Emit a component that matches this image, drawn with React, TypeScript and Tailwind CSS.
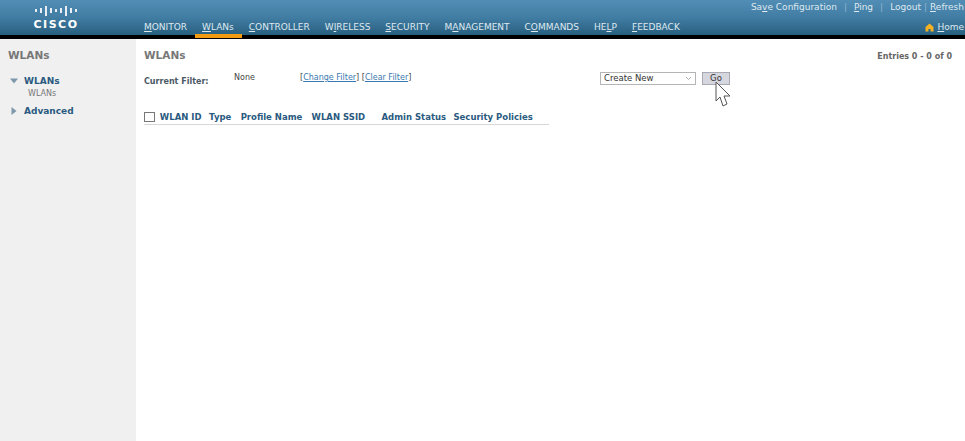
const nav: [string, string, string][] = [
  ["", "M", "ONITOR"],
  ["", "W", "LANs"],
  ["", "C", "ONTROLLER"],
  ["W", "I", "RELESS"],
  ["", "S", "ECURITY"],
  ["M", "A", "NAGEMENT"],
  ["C", "O", "MMANDS"],
  ["HE", "L", "P"],
  ["", "F", "EEDBACK"],
];

function Logo() {
  const bars = [3, 5, 10, 5, 3, 5, 10, 5, 3];
  return (
    <div className="flex w-[110px] flex-col items-center pt-[5px]">
      <div className="flex h-[11px] items-center gap-[3.4px] pl-[2px]">
        {bars.map((h, i) => (
          <div key={i} className="w-[1.6px] bg-[#e8eff4]" style={{ height: h }} />
        ))}
      </div>
      <div className="mt-[2px] pl-[2px] text-[11px] leading-[13px] font-bold tracking-[1.5px] text-white">CISCO</div>
    </div>
  );
}

function Header() {
  return (
    <header className="flex h-[39px] border-b-[4px] border-black bg-gradient-to-b from-[#518db5] via-[#417ca3] to-[#28607f]">
      <Logo />
      <nav className="flex items-start gap-[15px] pl-[34px] pt-[20.5px] text-[9px] leading-[12px] text-[#dfe9f0]">
        {nav.map(([a, b, c], i) => (
          <div key={i} className={i === 1 ? "relative" : ""}>
            <span>
              {a}
              <span className="underline">{b}</span>
              {c}
            </span>
            {i === 1 && <div className="absolute -left-[7px] -right-[8px] top-[13.5px] h-[4px] bg-[#f39c12]" />}
          </div>
        ))}
      </nav>
      <div className="ml-auto flex flex-col items-end pr-[1px] pt-px text-[9px] leading-[12px] text-[#dfe9f0]">
        <div className="flex items-center">
          <span>Sa<span className="underline">v</span>e Configuration</span>
          <span className="mx-[7px] text-[#8fb3cc]">|</span>
          <span><span className="underline">P</span>ing</span>
          <span className="mx-[7px] text-[#8fb3cc]">|</span>
          <span>Logout</span>
          <span className="mx-[3px] text-[#8fb3cc]">|</span>
          <span><span className="underline">R</span>efresh</span>
        </div>
        <div className="mt-[8px] flex items-center gap-[3px]">
          <svg width="9" height="9" viewBox="0 0 9 9"><path d="M4.5 0.5 L8.5 4 V8.5 H5.6 V6 H3.4 V8.5 H0.5 V4 Z" fill="#f5b324" /></svg>
          <span><span className="underline">H</span>ome</span>
        </div>
      </div>
    </header>
  );
}

function Sidebar() {
  return (
    <aside className="w-[136px] shrink-0 bg-[#f0f0f0] pl-[8px] pt-[10px]">
      <div className="text-[10.5px] leading-[13px] font-bold text-[#777777]">WLANs</div>
      <div className="mt-[13px] flex items-center gap-[6px] pl-[2px]">
        <svg width="8" height="6" viewBox="0 0 8 6"><path d="M0 0.5 H8 L4 5.5 Z" fill="#7d98ab" /></svg>
        <span className="text-[9px] leading-[12px] font-bold text-[#2a5a80]">WLANs</span>
      </div>
      <div className="pl-[20px] pt-px text-[8px] leading-[11px] text-[#777777]">WLANs</div>
      <div className="mt-[6px] flex items-center gap-[7px] pl-[3px]">
        <svg width="6" height="8" viewBox="0 0 6 8"><path d="M0.5 0 V8 L5.5 4 Z" fill="#7d98ab" /></svg>
        <span className="text-[9px] leading-[12px] font-bold text-[#2a5a80]">Advanced</span>
      </div>
    </aside>
  );
}

const cols: [string, string][] = [
  ["WLAN ID", "w-[50px]"],
  ["Type", "w-[32px]"],
  ["Profile Name", "w-[72px]"],
  ["WLAN SSID", "w-[71px]"],
  ["Admin Status", "w-[73px]"],
  ["Security Policies", "w-[97px]"],
];

function Main() {
  return (
    <main className="relative flex-1 pl-[8px] pr-[13px] pt-[10px]">
      <div className="flex items-start justify-between">
        <div className="text-[10.5px] leading-[13px] font-bold text-[#777777]">WLANs</div>
        <div className="pt-[3px] text-[8px] leading-[10px] font-bold text-[#666666]">Entries 0 - 0 of 0</div>
      </div>
      <div className="mt-[10px] flex items-start">
        <div className="w-[90px] pt-[4px] text-[8px] leading-[11px] font-bold text-[#4b5a66]">Current Filter:</div>
        <div className="w-[66px] text-[8px] leading-[11px] text-[#444444]">None</div>
        <div className="w-[300px] text-[8px] leading-[11px] text-[#444444]">
          [<span className="text-[#3b78b0] underline">Change Filter</span>] [<span className="text-[#3b78b0] underline">Clear Filter</span>]
        </div>
        <div className="flex h-[13px] w-[96px] items-center justify-between border border-[#b5b5b5] bg-white px-[3px] text-[8.5px] text-[#333333]">
          <span>Create New</span>
          <svg width="7" height="5" viewBox="0 0 7 5"><path d="M1 1 L3.5 3.5 L6 1" fill="none" stroke="#999999" strokeWidth="0.8" /></svg>
        </div>
        <div className="ml-[6px] flex h-[13px] w-[28px] items-center justify-center border border-[#a9a9b4] bg-[#d6d6de] text-[8.5px] text-[#333333]">Go</div>
      </div>
      <div className="mt-[24px] flex w-[405px] items-center border-b border-[#d8d8d8] pb-[1px]">
        <div className="mr-[5px] h-[10px] w-[11px] border border-[#777777] bg-white" />
        {cols.map(([t, w]) => (
          <div key={t} className={`${w} text-[8.5px] leading-[12px] font-bold whitespace-nowrap text-[#2a5a80]`}>{t}</div>
        ))}
      </div>
      <svg className="absolute left-[579px] top-[42px]" width="20" height="28" viewBox="0 0 20 28">
        <path d="M1 1 V20 L5 16 L8 25 L12 23 L9 15 H15 Z" fill="#ffffff" stroke="#555555" strokeWidth="1" />
      </svg>
    </main>
  );
}

export default function App() {
  return (
    <div className="flex h-[441px] w-[965px] flex-col overflow-hidden bg-white font-['DejaVu_Sans',sans-serif]">
      <Header />
      <div className="flex flex-1">
        <Sidebar />
        <Main />
      </div>
    </div>
  );
}
